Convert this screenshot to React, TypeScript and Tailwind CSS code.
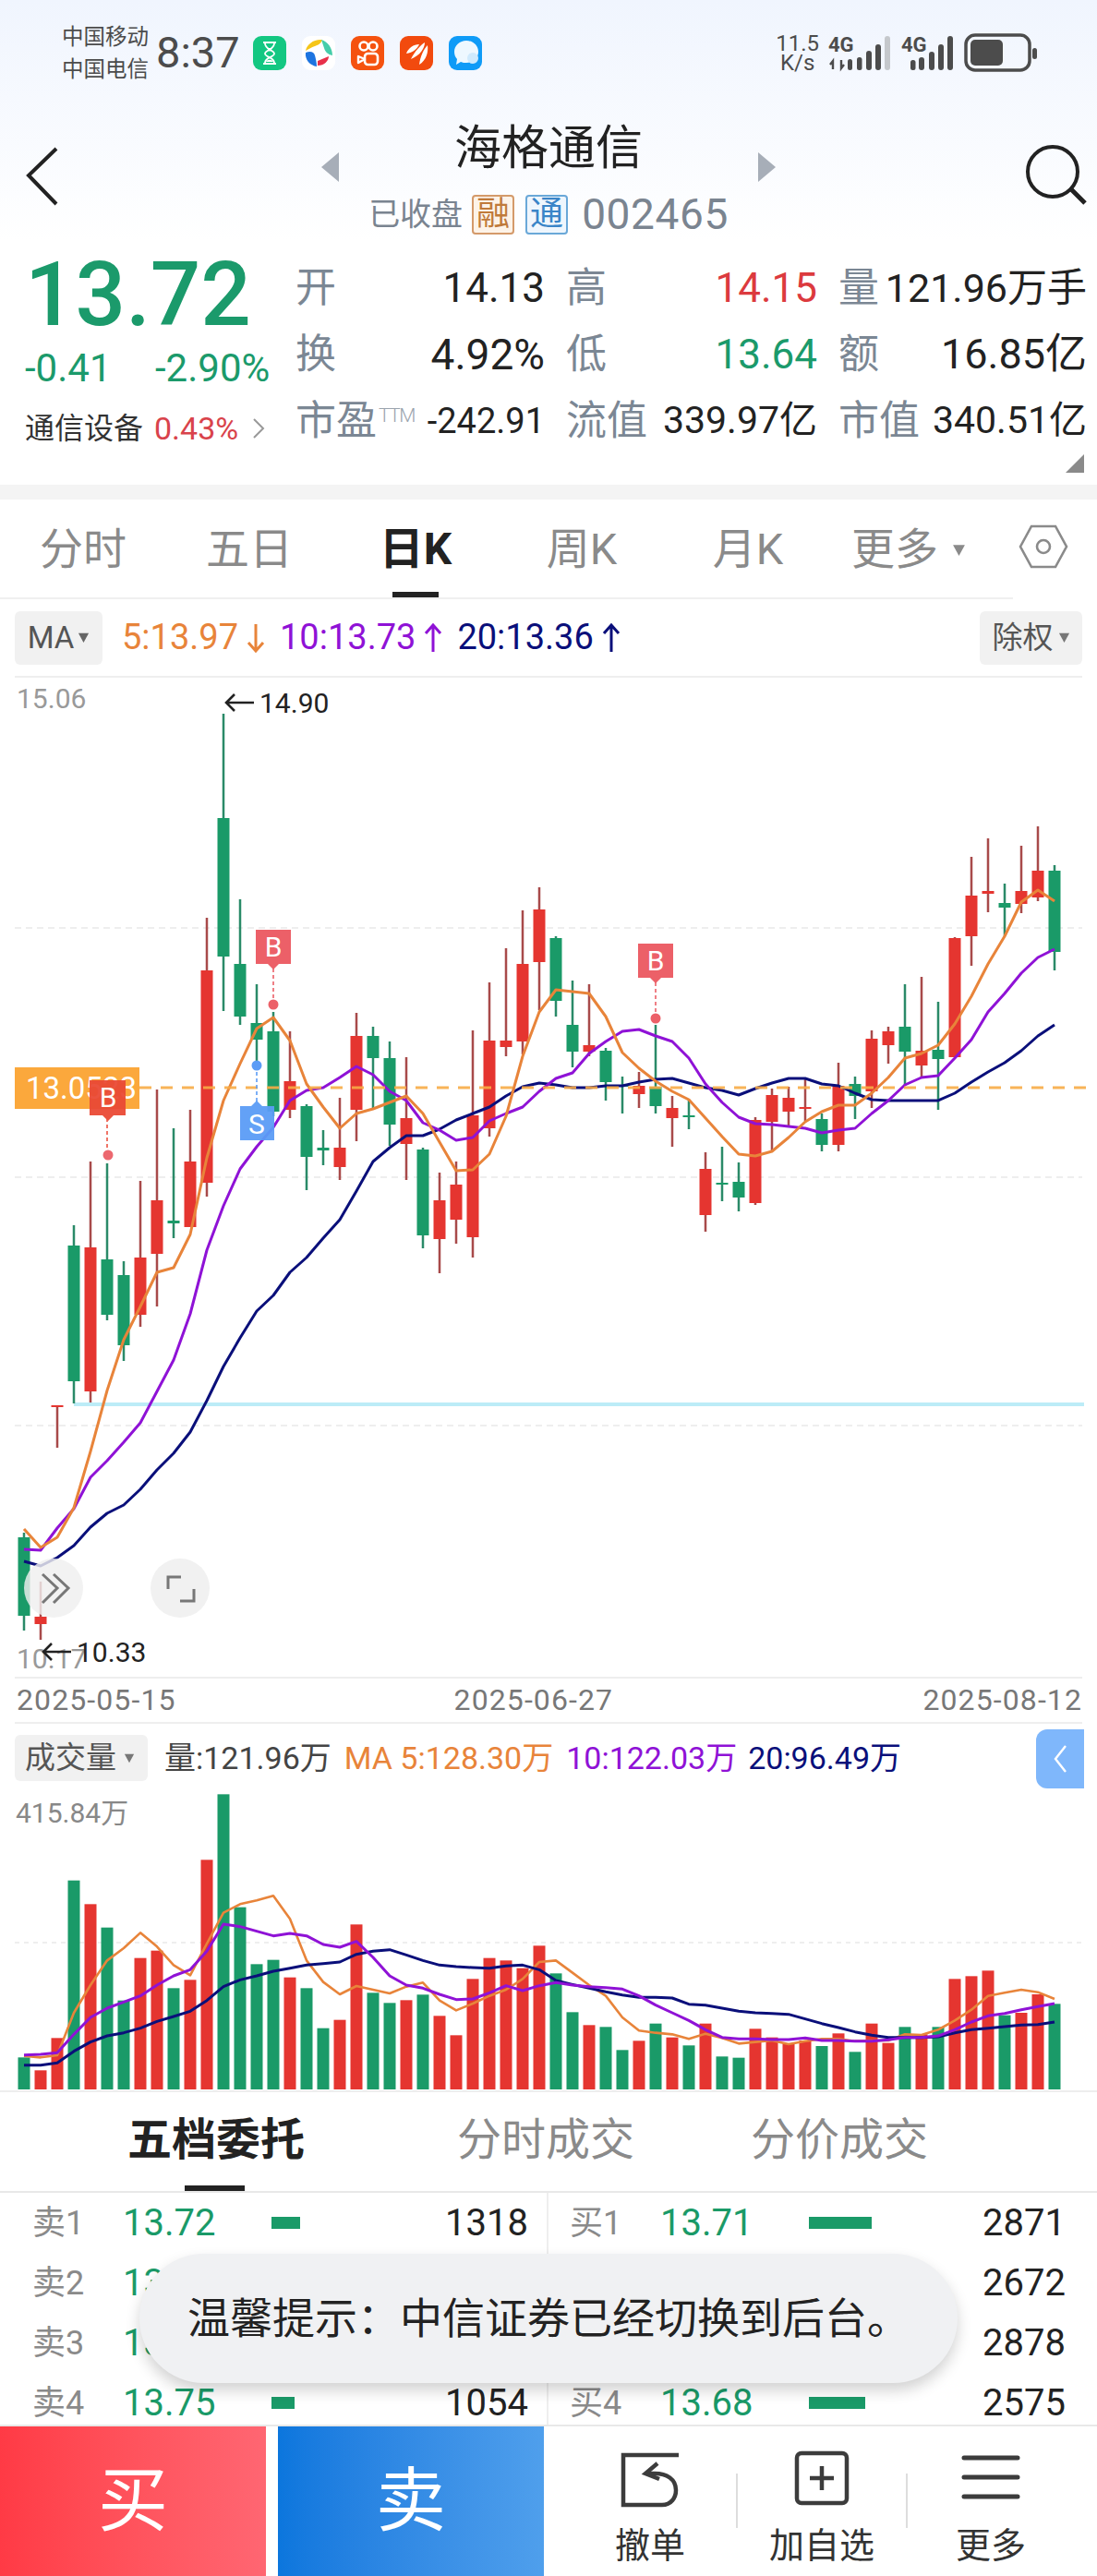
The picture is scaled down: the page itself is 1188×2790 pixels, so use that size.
import React from 'react';

// page coordinates: candle i sits at x = 26 + 18 * i
const xAt = (i: number) => 26 + 18 * i;

type Candle = [number, number, number, number, 'r' | 'g'];

const candles: Candle[] = [
  [1661, 1666, 1751, 1767, 'g'],
  [1714, 1752, 1760, 1777, 'r'],
  [1523, 1523, 1525, 1569, 'r'],
  [1328, 1350, 1497, 1521, 'g'],
  [1259, 1352, 1508, 1520, 'r'],
  [1261, 1365, 1425, 1431, 'g'],
  [1367, 1382, 1458, 1475, 'g'],
  [1280, 1363, 1425, 1438, 'r'],
  [1181, 1301, 1359, 1416, 'r'],
  [1223, 1323, 1326, 1342, 'g'],
  [1203, 1259, 1330, 1330, 'r'],
  [995, 1052, 1282, 1297, 'r'],
  [774, 887, 1037, 1096, 'g'],
  [975, 1045, 1102, 1111, 'g'],
  [1067, 1109, 1127, 1155, 'g'],
  [1097, 1118, 1205, 1210, 'g'],
  [1118, 1172, 1203, 1212, 'r'],
  [1197, 1199, 1254, 1290, 'g'],
  [1225, 1244, 1247, 1263, 'g'],
  [1190, 1244, 1265, 1279, 'r'],
  [1098, 1123, 1203, 1237, 'r'],
  [1113, 1123, 1147, 1202, 'g'],
  [1129, 1147, 1219, 1242, 'g'],
  [1146, 1212, 1240, 1279, 'r'],
  [1244, 1246, 1339, 1353, 'g'],
  [1271, 1301, 1343, 1380, 'r'],
  [1259, 1284, 1322, 1348, 'r'],
  [1117, 1209, 1341, 1363, 'r'],
  [1065, 1128, 1223, 1232, 'r'],
  [1028, 1128, 1135, 1145, 'r'],
  [987, 1045, 1129, 1143, 'r'],
  [962, 986, 1043, 1095, 'r'],
  [1015, 1017, 1085, 1102, 'g'],
  [1063, 1111, 1140, 1157, 'g'],
  [1067, 1133, 1140, 1145, 'r'],
  [1136, 1139, 1173, 1193, 'g'],
  [1167, 1177, 1178, 1207, 'g'],
  [1162, 1177, 1186, 1201, 'r'],
  [1111, 1178, 1199, 1207, 'g'],
  [1188, 1201, 1212, 1243, 'r'],
  [1192, 1209, 1211, 1224, 'g'],
  [1249, 1267, 1317, 1335, 'r'],
  [1243, 1282, 1284, 1302, 'g'],
  [1260, 1281, 1298, 1313, 'g'],
  [1211, 1214, 1304, 1306, 'r'],
  [1180, 1187, 1216, 1247, 'r'],
  [1178, 1190, 1205, 1220, 'r'],
  [1170, 1200, 1202, 1215, 'r'],
  [1207, 1213, 1241, 1248, 'g'],
  [1152, 1177, 1241, 1248, 'r'],
  [1167, 1175, 1188, 1213, 'g'],
  [1117, 1126, 1183, 1201, 'r'],
  [1113, 1118, 1133, 1153, 'r'],
  [1067, 1113, 1140, 1177, 'g'],
  [1059, 1139, 1155, 1168, 'r'],
  [1086, 1138, 1148, 1203, 'g'],
  [1016, 1017, 1146, 1146, 'r'],
  [929, 971, 1015, 1047, 'r'],
  [909, 966, 969, 989, 'r'],
  [958, 979, 984, 1015, 'g'],
  [917, 966, 980, 990, 'r'],
  [896, 944, 973, 977, 'r'],
  [938, 944, 1032, 1052, 'g'],
];

const priceMa5 = [
  1657, 1677, 1666, 1634, 1573, 1507, 1452, 1416, 1379, 1374, 1338, 1255, 1193, 1153, 1115, 1103, 1128, 1175, 1200, 1223, 1207,
  1202, 1195, 1188, 1207, 1238, 1269, 1268, 1251, 1210, 1145, 1097, 1073, 1075, 1077, 1102, 1141, 1158, 1172, 1183, 1192, 1212,
  1232, 1251, 1253, 1248, 1233, 1216, 1205, 1198, 1198, 1185, 1168, 1147, 1142, 1133, 1110, 1080, 1045, 1015, 978, 965, 977,
];
const priceMa10 = [
  1679, 1680, 1656, 1635, 1601, 1583, 1563, 1542, 1508, 1474, 1424, 1355, 1307, 1267, 1243, 1222, 1193, 1182, 1179, 1168, 1156,
  1165, 1183, 1193, 1217, 1225, 1236, 1233, 1215, 1207, 1200, 1183, 1169, 1163, 1142, 1129, 1118, 1116, 1123, 1129, 1147, 1175,
  1195, 1211, 1218, 1219, 1221, 1223, 1228, 1225, 1223, 1207, 1193, 1176, 1168, 1166, 1147, 1127, 1097, 1077, 1055, 1038, 1029,
];
const priceMa20 = [
  1692, 1697, 1688, 1675, 1655, 1640, 1631, 1614, 1593, 1575, 1552, 1518, 1481, 1450, 1421, 1404, 1379, 1363, 1342, 1322, 1291,
  1259, 1244, 1231, 1231, 1224, 1214, 1207, 1200, 1188, 1178, 1174, 1176, 1179, 1179, 1177, 1177, 1173, 1170, 1169, 1174, 1179,
  1182, 1187, 1180, 1174, 1169, 1169, 1175, 1177, 1185, 1192, 1193, 1193, 1193, 1193, 1185, 1173, 1162, 1152, 1139, 1123, 1111,
];

// volume panel values, y = 1860 + v / 3
const volTops = [
  1105, 1147, 1042, 530, 607, 683, 920, 782, 758, 880, 853, 463, 250, 617, 802, 788, 845, 880, 1010, 983, 673, 895, 928, 919, 901, 970,
  1033, 850, 782, 790, 815, 742, 832, 958, 1000, 1006, 1081, 1051, 995, 1040, 1066, 995, 1102, 1106, 1012, 1040, 1060, 1050, 1068, 1027,
  1087, 995, 1058, 1006, 1030, 1006, 850, 841, 823, 968, 960, 900, 931,
];
const volColors = 'GRRGRGGRRGRRGGGGRGGRRGGRGRRRRRRRGGRGGRGRGRGGRRRRGRGRRGRGRRRGRRG';
const volMa5 = [
  1100, 1105, 1098, 960, 870, 790, 750, 700, 745, 805, 838, 735, 635, 607, 595, 580, 655, 790, 860, 900, 873, 885, 897, 875, 862, 920,
  952, 930, 905, 885, 850, 795, 790, 830, 870, 905, 975, 1018, 1025, 1030, 1045, 1028, 1042, 1060, 1055, 1050, 1062, 1052, 1045, 1045,
  1052, 1050, 1050, 1030, 1032, 1015, 985, 950, 905, 895, 885, 893, 915,
];
const volMa10 = [
  1097, 1095, 1090, 1030, 975, 945, 925, 905, 870, 840, 820, 760, 672, 680, 695, 710, 702, 710, 738, 747, 728, 780, 840, 870, 880, 900,
  917, 915, 895, 872, 888, 872, 862, 870, 875, 878, 883, 905, 935, 960, 985, 1015, 1040, 1045, 1045, 1047, 1047, 1042, 1050, 1050, 1052,
  1052, 1048, 1040, 1040, 1035, 1015, 990, 970, 962, 950, 940, 930,
];
const volMa20 = [
  1130, 1130, 1123, 1085, 1055, 1035, 1025, 1010, 988, 972, 955, 920, 875, 853, 840, 825, 815, 805, 800, 795, 770, 760, 755, 772, 790,
  805, 810, 813, 815, 808, 805, 820, 855, 868, 880, 892, 902, 910, 910, 912, 932, 935, 945, 955, 960, 962, 965, 980, 995, 1008, 1022,
  1033, 1040, 1040, 1040, 1038, 1025, 1015, 1010, 1005, 1000, 998, 990,
];

const RED = '#e53530';
const GREEN = '#1a9a68';
const ORANGE = '#e8843a';
const PURPLE = '#8f12d6';
const NAVY = '#0a0f7a';

const linePoints = (ys: number[]) => ys.map((y, i) => `${xAt(i)},${y}`).join(' ');
const volY = (v: number) => 1860 + v / 3;

const Caret = ({ className }: { className: string }) => (
  <svg viewBox="0 0 14 14" className={className}>
    <path d="M1 2 H13 L7 13 Z" fill="currentColor" />
  </svg>
);

const Arrow = ({ up, color }: { up?: boolean; color: string }) => (
  <svg viewBox="0 0 22 32" className="w-[22px] h-[32px]">
    <path d={up ? 'M11 31 V2 M3 11 L11 2 L19 11' : 'M11 1 V30 M3 21 L11 30 L19 21'} fill="none" stroke={color} strokeWidth="3" />
  </svg>
);

const StatusIcons = () => (
  <div className="flex gap-[17px] ml-[14px]">
    <svg viewBox="0 0 36 37" className="w-[36px] h-[37px]">
      <rect width="36" height="37" rx="9" fill="#13c782" />
      <path d="M11 7 H25 M11 30 H25 M13 8 C13 15 23 15 23 19 C23 23 13 23 13 29 M23 8 C23 15 13 15 13 19 C13 23 23 23 23 29" fill="none" stroke="#fff" strokeWidth="1.8" />
      <path d="M15 13 H21 L18 17 Z M14 28 C15 25 21 25 22 28 Z" fill="#fff" />
    </svg>
    <svg viewBox="0 0 36 37" className="w-[36px] h-[37px]">
      <rect width="36" height="37" rx="9" fill="#fff" />
      <path d="M4 16 C5 9 13 3 22 4 C21 8 17 10 14 11 C10 12 8 14 4 16 Z" fill="#f5c518" />
      <path d="M21 4 C28 6 33 13 33 21 C28 20 25 17 24 13 C23 10 22 7 21 4 Z" fill="#45cdaa" />
      <path d="M4 18 C9 16 13 17 14 21 C15 25 16 29 16 33 C9 32 3 26 4 18 Z" fill="#1d74e0" />
      <path d="M17 27 C21 25 25 24 29 22 C29 27 24 32 17 32 Z" fill="#e8304a" />
    </svg>
    <svg viewBox="0 0 36 37" className="w-[36px] h-[37px]">
      <rect width="36" height="37" rx="9" fill="#f5520f" />
      <circle cx="14" cy="11" r="4.5" fill="none" stroke="#fff" strokeWidth="2.6" />
      <circle cx="24" cy="11" r="4.5" fill="none" stroke="#fff" strokeWidth="2.6" />
      <rect x="15" y="19" width="14" height="12" rx="3.5" fill="none" stroke="#fff" strokeWidth="2.6" />
      <path d="M15 25 L8 22 V29 Z" fill="none" stroke="#fff" strokeWidth="2.4" strokeLinejoin="round" />
    </svg>
    <svg viewBox="0 0 36 37" className="w-[36px] h-[37px]">
      <rect width="36" height="37" rx="9" fill="#f24a0e" />
      <path d="M7 19 C9 13 15 9 21 9 C19 14 14 18 7 19 Z" fill="#fff" />
      <path d="M12 25 C16 17 22 10 27 7 C27 13 22 21 12 25 Z" fill="#fff" />
      <path d="M21 31 C22 22 26 14 30 10 C31 17 29 26 21 31 Z" fill="#fff" />
    </svg>
    <svg viewBox="0 0 36 37" className="w-[36px] h-[37px]">
      <rect width="36" height="37" rx="9" fill="#0f9bf7" />
      <path d="M19 5 C26 5 32 10 32 17 C32 24 26 29 19 29 C17 29 15 29 13 28 L8 31 L9 25 C7 23 6 20 6 17 C6 10 12 5 19 5 Z" fill="#eef8ff" />
      <circle cx="26" cy="24" r="6" fill="#cfeafd" />
    </svg>
  </div>
);

const StatusRight = () => (
  <div className="flex items-center ml-auto mr-[58px]">
    <div className="flex flex-col items-center text-[24px] leading-[21px] text-[#4c4c4c]">
      <span>11.5</span>
      <span>K/s</span>
    </div>
    <svg viewBox="895 30 235 56" className="w-[235px] h-[56px] ml-[8px]" fill="#4c4c4c">
      <text x="897" y="56" fontSize="22" fontWeight="700">4G</text>
      <path d="M902 75 V66 L899 70 M911 65 V74 L914 70" fill="none" stroke="#4c4c4c" strokeWidth="2.4" />
      <rect x="918" y="64" width="5" height="12" rx="2.5" />
      <rect x="928" y="62" width="5.5" height="14" rx="2.5" />
      <rect x="938" y="55" width="6" height="21" rx="3" />
      <rect x="948" y="48" width="6" height="28" rx="3" />
      <rect x="958" y="39" width="6" height="37" rx="3" fill="#c5c8cc" />
      <text x="976" y="56" fontSize="22" fontWeight="700">4G</text>
      <rect x="986" y="65" width="5.5" height="11" rx="2.5" />
      <rect x="995" y="62" width="6" height="14" rx="3" />
      <rect x="1006" y="56" width="6" height="20" rx="3" />
      <rect x="1016" y="48" width="6" height="28" rx="3" />
      <rect x="1026" y="39" width="6" height="37" rx="3" />
      <rect x="1046" y="38" width="69" height="38" rx="10" fill="none" stroke="#4c4c4c" strokeWidth="3.5" />
      <rect x="1051" y="43" width="35" height="28" rx="5" />
      <rect x="1118" y="52" width="5" height="12" rx="2.5" />
    </svg>
  </div>
);

const Header = () => (
  <div className="grid grid-cols-[1fr_auto_1fr] items-start h-[162px] px-[10px] pt-[32px]">
    <svg viewBox="0 0 36 64" className="w-[36px] h-[64px] mt-[27px] ml-[18px]">
      <path d="M33 2 L3 31 L33 62" fill="none" stroke="#222" strokeWidth="4" />
    </svg>
    <div className="flex flex-col items-center">
      <div className="flex items-start">
        <svg viewBox="0 0 20 32" className="w-[20px] h-[32px] mt-[33px] mr-[124px]">
          <path d="M19 0 V32 L0 16 Z" fill="#a7aeb8" />
        </svg>
        <div className="text-[51px] leading-[58px] text-[#222]">海格通信</div>
        <svg viewBox="0 0 20 32" className="w-[20px] h-[32px] mt-[33px] ml-[124px]">
          <path d="M1 0 V32 L20 16 Z" fill="#a7aeb8" />
        </svg>
      </div>
      <div className="flex items-center mt-[13px] h-[44px] text-[#7a8490]">
        <span className="text-[34px]">已收盘</span>
        <span className="w-[46px] h-[43px] ml-[10px] flex items-center justify-center rounded-[4px] border-2 border-[#d49a6a] bg-[#fdf3e8] text-[#c07a3a] text-[36px] leading-none">融</span>
        <span className="w-[46px] h-[43px] ml-[12px] flex items-center justify-center rounded-[4px] border-2 border-[#6aa8d8] bg-[#eff6fd] text-[#3a85c8] text-[36px] leading-none">通</span>
        <span className="ml-[15px] text-[46px] tracking-[0.6px]">002465</span>
      </div>
    </div>
    <svg viewBox="0 0 68 66" className="w-[68px] h-[66px] mt-[24px] justify-self-end">
      <circle cx="30" cy="30" r="27" fill="none" stroke="#222" strokeWidth="4" />
      <path d="M50 49 L65 64" stroke="#222" strokeWidth="5" />
    </svg>
  </div>
);

type StatProps = {
  label: string;
  value: string;
  valueClass?: string;
  sup?: boolean;
};

const Stat = ({ label, value, valueClass = 'text-[44px] text-[#222]', sup }: StatProps) => (
  <div className="flex items-center justify-between h-[72px]">
    <span className="text-[44px] text-[#7b8794] whitespace-nowrap">
      {label}
      {sup && <sup className="text-[21px] font-light tracking-[-1.5px] text-[#9aa3ad] -top-[14px] ml-[2px]">TTM</sup>}
    </span>
    <span className={`${valueClass} whitespace-nowrap`}>{value}</span>
  </div>
);

const Quote = () => (
  <div className="relative flex h-[263px] bg-white">
    <div className="w-[320px] pl-[27px] flex flex-col">
      <div className="h-[108px] mt-[3px] text-[96px] leading-[108px] font-medium text-[#1b9a6b]">13.72</div>
      <div className="flex h-[40px] text-[42px] leading-[40px] text-[#1b9a6b] mt-[6px]">
        <span className="w-[141px]">-0.41</span>
        <span>-2.90%</span>
      </div>
      <div className="flex items-center h-[40px] mt-[25px] text-[32px]">
        <span className="text-[#333]">通信设备</span>
        <span className="ml-[12px] text-[34px] text-[#d9434b]">0.43%</span>
        <svg viewBox="0 0 14 22" className="w-[14px] h-[22px] ml-[15px]">
          <path d="M2 1 L12 11 L2 21" fill="none" stroke="#999" strokeWidth="2" />
        </svg>
      </div>
    </div>
    <div className="w-[857px] h-[216px] mt-[14px] grid grid-cols-[270px_272px_269px] gap-x-[23px]">
      <Stat label="开" value="14.13" />
      <Stat label="高" value="14.15" valueClass="text-[44px] text-[#dc3a3e]" />
      <Stat label="量" value="121.96万手" valueClass="text-[43px] text-[#222]" />
      <Stat label="换" value="4.92%" valueClass="text-[46px] text-[#222]" />
      <Stat label="低" value="13.64" valueClass="text-[44px] text-[#1b9a6b]" />
      <Stat label="额" value="16.85亿" valueClass="text-[45px] text-[#222]" />
      <Stat label="市盈" value="-242.91" sup valueClass="text-[38px] text-[#222]" />
      <Stat label="流值" value="339.97亿" valueClass="text-[41px] text-[#222]" />
      <Stat label="市值" value="340.51亿" valueClass="text-[41px] text-[#222]" />
    </div>
    <svg viewBox="0 0 20 20" className="absolute right-[14px] bottom-[13px] w-[20px] h-[20px]">
      <path d="M20 0 V20 H0 Z" fill="#8a8a8a" />
    </svg>
  </div>
);

const Tab = ({ label, active }: { label: string; active?: boolean }) => (
  <div className="relative w-[180px] h-full flex items-center justify-center pt-[2px]">
    <span className={active ? 'text-[48px] font-bold text-[#222]' : 'text-[47px] text-[#8a8a8a]'}>{label}</span>
    {active && <span className="absolute bottom-0 left-[65px] w-[50px] h-[6px] bg-[#222]" />}
  </div>
);

const ChartTabs = () => (
  <div className="flex items-center h-[108px]">
    <div className="flex w-[1097px] h-[108px] border-b-2 border-[#f0f0f0]">
      <Tab label="分时" />
      <Tab label="五日" />
      <Tab label="日K" active />
      <Tab label="周K" />
      <Tab label="月K" />
      <div className="w-[197px] h-full flex items-center pt-[2px] pl-[22px]">
        <span className="text-[47px] text-[#8a8a8a]">更多</span>
        <Caret className="w-[15px] h-[15px] ml-[15px] text-[#8a8a8a]" />
      </div>
    </div>
    <svg viewBox="0 0 54 48" className="w-[54px] h-[48px] ml-[6px] mb-[6px]">
      <path d="M2 24 L14 2 H40 L52 24 L40 46 H14 Z" fill="none" stroke="#8a8a8a" strokeWidth="2.6" />
      <circle cx="27" cy="24" r="7" fill="none" stroke="#8a8a8a" strokeWidth="2.6" />
    </svg>
  </div>
);

const MaRow = () => (
  <div className="flex items-center h-[85px] mx-[16px] border-b-2 border-[#eee] text-[38px]">
    <div className="flex items-center justify-center w-[95px] h-[58px] bg-[#f1f1f1] rounded-[6px] text-[33px] text-[#555]">
      MA
      <Caret className="w-[13px] h-[13px] ml-[4px] text-[#666]" />
    </div>
    <span className="ml-[21px] text-[#e8843a]">5:13.97</span>
    <span className="ml-[8px] flex"><Arrow color={ORANGE} /></span>
    <span className="ml-[15px] text-[#8f12d6]">10:13.73</span>
    <span className="ml-[8px] flex"><Arrow up color={PURPLE} /></span>
    <span className="ml-[15px] text-[#0a0f7a]">20:13.36</span>
    <span className="ml-[8px] flex"><Arrow up color={NAVY} /></span>
    <div className="flex items-center justify-center w-[111px] h-[58px] ml-auto bg-[#f1f1f1] rounded-[6px] text-[33px] text-[#555]">
      除权
      <Caret className="w-[13px] h-[13px] ml-[5px] text-[#777]" />
    </div>
  </div>
);

const TradeMark = ({ x, top, dotY, color, label }: { x: number; top: number; dotY: number; color: string; label: string }) => (
  <g>
    <line x1={x} y1={top + 42} x2={x} y2={dotY} stroke={color} strokeWidth="1.6" strokeDasharray="4 3" />
    <circle cx={x} cy={dotY} r="5.5" fill={color} />
    <path d={`M${x - 19} ${top} H${x + 19} V${top + 37} H${x + 6} L${x} ${top + 43} L${x - 6} ${top + 37} H${x - 19} Z`} fill={color} />
    <text x={x} y={top + 29} fontSize="30" fill="#fff" textAnchor="middle">{label}</text>
  </g>
);

const PriceChart = () => (
  <svg viewBox="0 735 1188 1082" className="block w-[1188px] h-[1082px]">
    {[1006, 1276, 1545].map((y) => (
      <line key={y} x1="16" y1={y} x2="1172" y2={y} stroke="#eeeeee" strokeWidth="2" strokeDasharray="7 5" />
    ))}
    <rect x="80" y="1520" width="1094" height="4" fill="#bcecf7" />
    {candles.map(([top, bodyTop, bodyBottom, bottom, c], i) => (
      <g key={i}>
        <rect x={xAt(i) - 1.25} y={top} width="2.5" height={bottom - top} fill={c === 'r' ? '#a84a4a' : '#2a8a68'} />
        <rect x={xAt(i) - 6.5} y={bodyTop} width="13" height={bodyBottom - bodyTop} fill={c === 'r' ? RED : GREEN} />
      </g>
    ))}
    <polyline points={linePoints(priceMa20)} fill="none" stroke={NAVY} strokeWidth="3" strokeLinejoin="round" />
    <polyline points={linePoints(priceMa10)} fill="none" stroke={PURPLE} strokeWidth="3" strokeLinejoin="round" />
    <polyline points={linePoints(priceMa5)} fill="none" stroke={ORANGE} strokeWidth="3" strokeLinejoin="round" />
    <line x1="151" y1="1179" x2="1176" y2="1179" stroke="#f8ab46" strokeWidth="3" strokeDasharray="13 10" opacity="0.9" />
    <rect x="16" y="1157" width="135" height="45" fill="#fba83c" />
    <text x="28" y="1191" fontSize="33" fill="#fff">13.0523</text>
    <TradeMark x={296} top={1008} dotY={1089} color="#ec6068" label="B" />
    <TradeMark x={710} top={1023} dotY={1104} color="#ec6068" label="B" />
    <g opacity="0.95">
      <line x1="116" y1="1212" x2="116" y2="1252" stroke="#ec4a38" strokeWidth="1.6" strokeDasharray="4 3" />
      <circle cx="117" cy="1252" r="5.5" fill="#ec6068" />
      <path d="M97 1171 H136 V1209 H123 L117 1215 L111 1209 H97 Z" fill="#ea4a35" />
      <text x="117" y="1200" fontSize="30" fill="#fff" textAnchor="middle">B</text>
    </g>
    <line x1="278" y1="1155" x2="278" y2="1195" stroke="#5b9cf6" strokeWidth="1.6" strokeDasharray="4 3" />
    <circle cx="278" cy="1155" r="5.5" fill="#5b9cf6" />
    <path d="M260 1199 H272 L278 1193 L284 1199 H297 V1236 H260 Z" fill="#5b9cf6" fillOpacity="0.95" />
    <text x="278" y="1229" fontSize="30" fill="#fff" textAnchor="middle">S</text>
    <text x="18" y="768" fontSize="30" fill="#999">15.06</text>
    <path d="M275 762 H245 M254 753 L245 762 L254 771" fill="none" stroke="#222" strokeWidth="2.6" />
    <text x="281" y="773" fontSize="30" fill="#222">14.90</text>
    <text x="18" y="1808" fontSize="30" fill="#999">10.17</text>
    <path d="M77 1790 H47 M56 1781 L47 1790 L56 1799" fill="none" stroke="#222" strokeWidth="2.6" />
    <text x="83" y="1801" fontSize="30" fill="#222">10.33</text>
    <circle cx="58" cy="1721" r="32" fill="#efefef" fillOpacity="0.82" />
    <path d="M46 1706 L62 1721 L46 1737 M58 1706 L74 1721 L58 1737" fill="none" stroke="#777" strokeWidth="3" />
    <circle cx="195" cy="1721" r="32" fill="#f1f1f1" />
    <path d="M196 1709 H182 V1722 M195 1735 H210 V1722" fill="none" stroke="#777" strokeWidth="3" />
  </svg>
);

const DateAxis = () => (
  <div className="flex items-center h-[51px] mx-[16px] pl-[2px] pb-[1px] border-t-2 border-b-2 border-[#eee] text-[32px] tracking-[1.1px] text-[#777]">
    <span>2025-05-15</span>
    <span className="ml-[301px]">2025-06-27</span>
    <span className="ml-auto">2025-08-12</span>
  </div>
);

const VolumeHeader = () => (
  <div className="relative flex items-center h-[74px] pl-[16px] text-[34px] whitespace-nowrap">
    <div className="flex items-center w-[144px] h-[50px] pl-[11px] bg-[#f1f1f1] rounded-[6px] text-[33px] text-[#555]">
      成交量
      <Caret className="w-[12px] h-[12px] ml-[8px] text-[#777]" />
    </div>
    <span className="ml-[18px] text-[#444]">量:121.96万</span>
    <span className="ml-[14px] text-[#e8843a]">MA 5:128.30万</span>
    <span className="ml-[14px] text-[#8f12d6]">10:122.03万</span>
    <span className="ml-[12px] text-[#0a0f7a]">20:96.49万</span>
    <div className="absolute right-[14px] top-[6px] flex items-center justify-center w-[52px] h-[64px] rounded-l-[12px] bg-[#7fb7fb]">
      <svg viewBox="0 0 16 30" className="w-[16px] h-[30px]">
        <path d="M14 1 L3 15 L14 29" fill="none" stroke="#fff" strokeWidth="2.4" />
      </svg>
    </div>
  </div>
);

const VolumeChart = () => (
  <svg viewBox="0 1941 1188 325" className="block w-[1188px] h-[325px]">
    <line x1="16" y1="2104" x2="1172" y2="2104" stroke="#eeeeee" strokeWidth="2" strokeDasharray="5 5" />
    {volTops.map((v, i) => (
      <rect key={i} x={xAt(i) - 6.5} y={volY(v)} width="13" height={2263 - volY(v)} fill={volColors[i] === 'R' ? RED : GREEN} />
    ))}
    <polyline points={linePoints(volMa5.map(volY))} fill="none" stroke={ORANGE} strokeWidth="2.6" strokeLinejoin="round" />
    <polyline points={linePoints(volMa20.map(volY))} fill="none" stroke={NAVY} strokeWidth="3" strokeLinejoin="round" />
    <polyline points={linePoints(volMa10.map(volY))} fill="none" stroke={PURPLE} strokeWidth="3" strokeLinejoin="round" />
    <text x="17" y="1974" fontSize="30" fill="#888">415.84万</text>
    <line x1="0" y1="2265" x2="1188" y2="2265" stroke="#eeeeee" strokeWidth="2" />
  </svg>
);

const BookTabs = () => (
  <div className="flex items-center h-[109px] border-b-2 border-[#e8e8e8] text-[48px] pb-[3px]">
    <div className="relative h-full flex items-center ml-[138px] font-bold text-[#222]">
      五档委托
      <span className="absolute -bottom-[3px] left-[62px] w-[65px] h-[6px] bg-[#222]" />
    </div>
    <div className="ml-[165px] text-[#8a8a8a]">分时成交</div>
    <div className="ml-[126px] text-[#8a8a8a]">分价成交</div>
  </div>
);

type BookEntry = { label: string; price: string; bar: number; qty: string };

const asks: BookEntry[] = [
  { label: '卖1', price: '13.72', bar: 31, qty: '1318' },
  { label: '卖2', price: '13.73', bar: 30, qty: '1212' },
  { label: '卖3', price: '13.74', bar: 28, qty: '1125' },
  { label: '卖4', price: '13.75', bar: 25, qty: '1054' },
];
const bids: BookEntry[] = [
  { label: '买1', price: '13.71', bar: 68, qty: '2871' },
  { label: '买2', price: '13.70', bar: 63, qty: '2672' },
  { label: '买3', price: '13.69', bar: 68, qty: '2878' },
  { label: '买4', price: '13.68', bar: 61, qty: '2575' },
];

const BookRow = ({ entry }: { entry: BookEntry }) => (
  <div className="flex items-center h-[65px]">
    <span className="w-[98px] text-[36px] text-[#8a8a8a]">{entry.label}</span>
    <span className="w-[161px] text-[40px] text-[#1a9a68]">{entry.price}</span>
    <span className="h-[13px] bg-[#1a9a68]" style={{ width: entry.bar }} />
    <span className="ml-auto text-[40px] text-[#222]">{entry.qty}</span>
  </div>
);

const OrderBook = () => (
  <div className="relative flex h-[253px] overflow-hidden border-b-2 border-[#e8e8e8]">
    <div className="w-[594px] pl-[35px] pr-[20px] border-r-2 border-[#eee]">
      {asks.map((e) => <BookRow key={e.label} entry={e} />)}
    </div>
    <div className="flex-1 pl-[23px] pr-[34px]">
      {bids.map((e) => <BookRow key={e.label} entry={e} />)}
    </div>
  </div>
);

const BottomBar = () => (
  <div className="relative flex h-[162px]">
    <div className="flex items-center justify-center w-[288px] bg-gradient-to-r from-[#ff3a45] to-[#ff6672] text-[76px] text-white">买</div>
    <div className="flex items-center justify-center w-[288px] ml-[13px] bg-gradient-to-r from-[#0b76dd] to-[#4f9fec] text-[76px] text-white">卖</div>
    <div className="flex pl-[22px] text-[38px] text-[#333]">
      <div className="flex flex-col items-center w-[186px] pt-[28px]">
        <svg viewBox="0 0 66 60" className="w-[66px] h-[60px]" fill="none" stroke="#3c3c3c" strokeWidth="4.5">
          <path d="M64 3 H4 V57 H46 C56 57 61 49 61 41 C61 29 51 23 38 23 H30" />
          <path d="M41 12 L28 23 L43 29" />
        </svg>
        <span className="leading-[44px] mt-[19px]">撤单</span>
      </div>
      <span className="w-[2px] h-[59px] mt-[51px] bg-[#ddd]" />
      <div className="flex flex-col items-center w-[182px] pt-[26px]">
        <svg viewBox="0 0 60 60" className="w-[60px] h-[60px]" fill="none" stroke="#3c3c3c" strokeWidth="4.5">
          <rect x="3" y="3" width="54" height="54" rx="5" />
          <path d="M30 17 V43 M17 30 H43" />
        </svg>
        <span className="leading-[44px] mt-[21px]">加自选</span>
      </div>
      <span className="w-[2px] h-[59px] mt-[51px] bg-[#ddd]" />
      <div className="flex flex-col items-center w-[180px] pt-[31px]">
        <svg viewBox="0 0 64 48" className="w-[64px] h-[48px]" stroke="#3c3c3c" strokeWidth="5" strokeLinecap="round">
          <path d="M3 3 H61 M3 24 H61 M3 45 H61" />
        </svg>
        <span className="leading-[44px] mt-[28px]">更多</span>
      </div>
    </div>
  </div>
);

export default function App() {
  return (
    <div className="relative w-[1188px] h-[2790px] overflow-hidden bg-white font-['Roboto','Noto_Sans_CJK_SC',sans-serif]">
      <div className="h-[262px] bg-gradient-to-b from-[#f0f5fe] to-white">
        <div className="flex items-center h-[100px] pl-[67px] pt-[15px]">
          <div className="flex flex-col text-[23.5px] leading-[35px] text-[#4c4c4c]">
            <span>中国移动</span>
            <span>中国电信</span>
          </div>
          <span className="ml-[8px] text-[47px] text-[#4c4c4c]">8:37</span>
          <StatusIcons />
          <StatusRight />
        </div>
        <Header />
      </div>
      <Quote />
      <div className="h-[16px] bg-[#f4f4f4]" />
      <ChartTabs />
      <MaRow />
      <PriceChart />
      <DateAxis />
      <VolumeHeader />
      <VolumeChart />
      <BookTabs />
      <OrderBook />
      <BottomBar />
      <div className="absolute left-[151px] top-[2441px] flex items-center justify-center w-[886px] h-[140px] rounded-[70px] bg-[#f0f1f3] shadow-[0_8px_16px_rgba(0,0,0,0.18)] text-[46px] text-[#222]">
        温馨提示：中信证券已经切换到后台。
      </div>
    </div>
  );
}
